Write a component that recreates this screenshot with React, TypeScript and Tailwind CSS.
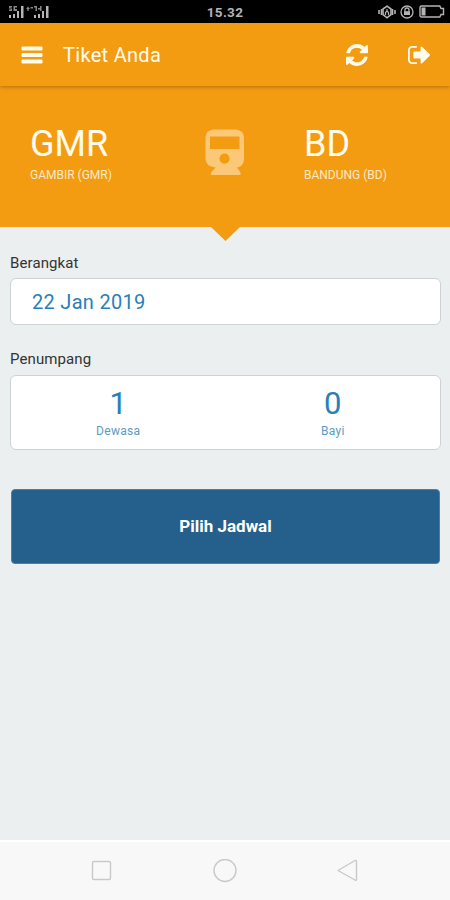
type StationProps = {
  code: string;
  name: string;
  className?: string;
};

type CounterProps = {
  value: number;
  label: string;
};

export default function App() {
  return (
    <div className="flex h-[900px] w-[450px] flex-col overflow-hidden bg-[#ebeff0] font-['Roboto','Liberation_Sans',sans-serif]">
      <StatusBar />
      <Header />
      <Route />
      <main className="flex-1 pl-[10px] pr-[9px] pt-[26px]">
        <h2 className="h-[25px] text-[15px] leading-[20px] tracking-[0.1px] text-[#333]">Berangkat</h2>
        <div className="flex h-[47px] items-center rounded-md border-[1.5px] border-[#cdd2d5] bg-white pl-[21px] text-[20px] tracking-[0.3px] text-[#2980b9]">
          22 Jan 2019
        </div>
        <h2 className="mt-6 h-[26px] text-[15px] leading-[20px] tracking-[0.1px] text-[#333]">Penumpang</h2>
        <div className="grid h-[75px] grid-cols-2 rounded-md border-[1.5px] border-[#cdd2d5] bg-white pt-[10px]">
          <Counter value={1} label="Dewasa" />
          <Counter value={0} label="Bayi" />
        </div>
        <button className="mt-[39px] ml-px flex h-[75px] w-[429px] items-center justify-center rounded-[4px] border border-[#4d7ea3] bg-[#255f8b] text-[17px] font-bold text-white">
          Pilih Jadwal
        </button>
      </main>
      <NavBar />
    </div>
  );
}

function StatusBar() {
  return (
    <div className="grid h-[23px] grid-cols-3 items-center bg-black text-[#b4b4b4]">
      <svg className="ml-2 h-[14px] w-[44px]" viewBox="0 0 44 14" fill="currentColor">
        <path d="M1 10h2v3H1zM5 9h2v4H5zM9 6h2v7H9zM13 1h2.500v12H13zM26 10h2v3h-2zM30 9h2v4h-2zM34 6h2v7h-2zM38 1h2.500v12H38z" />
        <path d="M1 1h3v1.500H2.500v1H4V6H1V4.500h1.500v-1H1zM5.500 1H9v1.500H7V4h2v2H5.500zM18 4l2-2.500L22 4h-1.300v2h-1.400V4zM22.500 2H25v1.500h-2.500zM26 1h3v5h-1.500V2.500H26zM30 3h2V1h1.500v5H32V4.500h-2z" opacity=".75" />
      </svg>
      <span className="pt-[3px] text-center text-[13.500px] leading-none font-bold tracking-[0.3px]">15.32</span>
      <div className="flex items-center justify-end gap-1 pr-[5px]">
        <svg className="h-[14px] w-[18px]" viewBox="0 0 18 14" fill="none" stroke="currentColor" strokeWidth="1.600">
          <path d="M1 5v4M3.500 4v6M17 5v4M14.500 4v6" />
          <path d="M9 1.200 13 4v5.500L9 12.800 5 9.500V4z" />
          <path d="M9 4v3M7.500 10V7.500L9 6l1.500 1.500V10" strokeWidth="1.200" />
        </svg>
        <svg className="h-[14px] w-[14px]" viewBox="0 0 14 14" fill="none" stroke="currentColor">
          <circle cx="7" cy="7" r="6" strokeWidth="1.300" />
          <path d="M5 6.500V5a2 2 0 0 1 4 0v1.500" strokeWidth="1.300" />
          <path d="M4 6.200h6V10H4z" fill="currentColor" stroke="none" />
        </svg>
        <svg className="ml-px h-[13px] w-[26px]" viewBox="0 0 26 13" fill="none" stroke="currentColor">
          <path d="M2.500 1h18.300L22 3.500h2.500v6H22L20.800 12H2.500A1.500 1.500 0 0 1 1 10.500v-8A1.500 1.500 0 0 1 2.500 1z" strokeWidth="1.400" />
          <path d="M2.500 2.500h4v8h-4z" fill="currentColor" stroke="none" />
        </svg>
      </div>
    </div>
  );
}

function Header() {
  return (
    <header className="z-10 flex h-[63px] items-center bg-[#f39c12] pr-[20px] pl-[21px] text-[#fffbed] shadow-[0_1px_4px_rgba(0,0,0,0.28)]">
      <svg className="h-[18px] w-[22px]" viewBox="0 0 22 18" fill="currentColor">
        <rect x="0.500" y="0.500" width="21" height="4" rx="1" />
        <rect x="0.500" y="7" width="21" height="4" rx="1" />
        <rect x="0.500" y="13.500" width="21" height="4" rx="1" />
      </svg>
      <h1 className="ml-5 flex-1 text-[20px] tracking-[0.3px]">Tiket Anda</h1>
      <svg className="h-[22px] w-[22px]" viewBox="0 128 1536 1536" fill="currentColor">
        <path d="M1511 1056q0 5-1 7-64 268-268 434.500t-478 166.500q-146 0-282.500-55t-243.500-157l-129 129q-19 19-45 19t-45-19-19-45v-448q0-26 19-45t45-19h448q26 0 45 19t19 45-19 45l-137 137q71 66 161 102t187 36q134 0 250-65t186-179q11-17 53-117 8-23 30-23h192q13 0 22.500 9.500t9.500 22.500zM1536 256v448q0 26-19 45t-45 19h-448q-26 0-45-19t-19-45 19-45l138-138q-148-137-349-137-134 0-250 65t-186 179q-11 17-53 117-8 23-30 23h-199q-13 0-22.500-9.500t-9.500-22.500v-7q65-268 270-434.500t480-166.500q146 0 284 55.500t245 156.500l130-129q19-19 45-19t45 19 19 45z" />
      </svg>
      <svg className="ml-10 h-[20px] w-[22px]" viewBox="0 192 1568 1408" fill="currentColor">
        <path d="M640 1440q0 4 1 20t.5 26.500-3 23.500-10 19.500-20.500 6.500h-320q-119 0-203.500-84.500t-84.500-203.500v-704q0-119 84.500-203.500t203.500-84.500h320q13 0 22.500 9.500t9.500 22.500q0 4 1 20t.5 26.500-3 23.500-10 19.500-20.500 6.500h-320q-66 0-113 47t-47 113v704q0 66 47 113t113 47h312l11.500 1 11.500 3 8 5.500 7 9 2 13.500zm928-544q0 26-19 45l-544 544q-19 19-45 19t-45-19-19-45v-288h-448q-26 0-45-19t-19-45v-384q0-26 19-45t45-19h448v-288q0-26 19-45t45-19 45 19l544 544q19 19 19 45z" />
      </svg>
    </header>
  );
}

function Route() {
  return (
    <section className="relative flex h-[141px] bg-[#f39c12] pt-[38px] pl-[30px] text-[#fffbed]">
      <Station code="GMR" name="GAMBIR (GMR)" className="w-[175px]" />
      <svg className="mt-[5px] h-[47px] w-[40px] text-[#fbc877]" viewBox="0 0 40 47" fill="currentColor">
        <path
          fillRule="evenodd"
          d="M8 .5h23q8 1 8 8V30q0 7-7 8.500l3.500 5V46H6v-2.500l4.500-5Q.500 37 .500 30V8.500Q.500 1.500 8 .500zM5 7.500V20h29.500V7.500zM19.500 24.500a5 5 0 1 0 0 10.200 5 5 0 0 0 0-10.200z"
        />
      </svg>
      <Station code="BD" name="BANDUNG (BD)" className="ml-[59px]" />
      {/* notch pointing at the form */}
      <svg className="absolute top-full left-[211px] h-[14px] w-[29px] text-[#f39c12]" viewBox="0 0 29 14" fill="currentColor">
        <path d="M0 0h29L14.500 14z" />
      </svg>
    </section>
  );
}

function Station({code, name, className}: StationProps) {
  return (
    <div className={className}>
      <div className="text-[36px] leading-[40px]">{code}</div>
      <div className="mt-[3px] text-[12px] leading-[16px] text-[#fde9c4]">{name}</div>
    </div>
  );
}

function Counter({value, label}: CounterProps) {
  return (
    <div className="text-center text-[#2980b9]">
      <div className="text-[31px] leading-[36px]">{value}</div>
      <div className="mt-px text-[12px] leading-[16px] tracking-[0.3px] text-[#5a9cc2]">{label}</div>
    </div>
  );
}

function NavBar() {
  return (
    <nav className="flex h-[60px] items-center justify-center gap-[99px] border-t-2 border-white bg-[#f8f8f8] text-[#c9c9c9]">
      <svg className="h-6 w-6" viewBox="0 0 24 24" fill="none" stroke="currentColor" strokeWidth="1.400">
        <rect x="2.500" y="2.500" width="18" height="18" rx="1.500" />
      </svg>
      <svg className="h-6 w-6" viewBox="0 0 24 24" fill="none" stroke="currentColor" strokeWidth="1.400">
        <circle cx="12" cy="11.500" r="11" />
      </svg>
      <svg className="h-6 w-6" viewBox="0 0 24 24" fill="none" stroke="currentColor" strokeWidth="1.400" strokeLinejoin="round">
        <path d="M2 11.500 19 1.500q1.500-.5 1.500 1v18q0 1.500-1.500 .5z" />
      </svg>
    </nav>
  );
}
